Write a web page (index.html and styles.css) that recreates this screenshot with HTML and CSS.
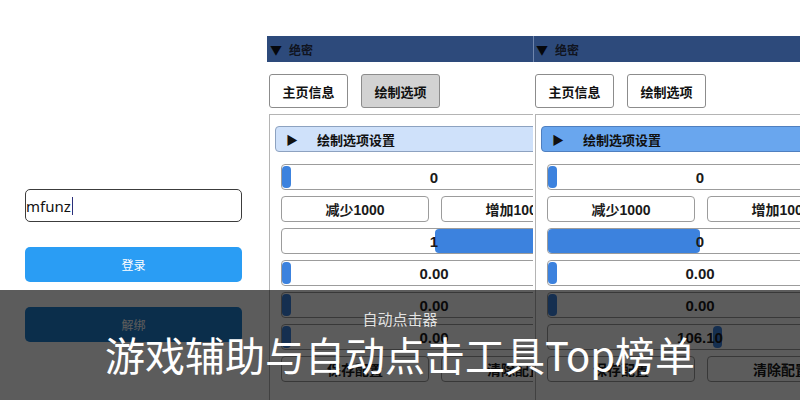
FILE: index.html
```html
<!DOCTYPE html>
<html lang="zh-CN">
<head>
<meta charset="utf-8">
<title>自动点击器</title>
<link rel="stylesheet" href="styles.css">
</head>
<body>
<div class="stage">
  <section class="login">
    <div class="field"><span class="typed">mfunz</span><span class="caret"></span></div>
    <button class="btn-primary">登录</button>
    <button class="btn-primary">解绑</button>
  </section>

  <section class="panel">
    <div class="bar"><span class="tri">▼</span>绝密</div>
    <div class="tabs">
      <button class="tab">主页信息</button>
      <button class="tab tab-active">绘制选项</button>
    </div>
    <div class="content">
      <div class="group-head group-head-soft"><span class="play">▶</span>绘制选项设置</div>
      <div class="rows">
        <div class="slider"><span class="thumb"></span><span class="val">0</span></div>
        <div class="pair"><button class="cmd">减少1000</button><button class="cmd">增加1000</button></div>
        <div class="slider"><span class="fill fill-right" style="left:153px"></span><span class="val">1</span></div>
        <div class="slider"><span class="thumb"></span><span class="val">0.00</span></div>
        <div class="slider"><span class="thumb"></span><span class="val">0.00</span></div>
        <div class="slider"><span class="thumb"></span><span class="val">0.00</span></div>
        <div class="pair"><button class="cmd">保存配置</button><button class="cmd">清除配置</button></div>
      </div>
    </div>
  </section>

  <section class="panel panel-next">
    <div class="bar"><span class="tri">▼</span>绝密</div>
    <div class="tabs">
      <button class="tab">主页信息</button>
      <button class="tab">绘制选项</button>
    </div>
    <div class="content">
      <div class="group-head group-head-strong"><span class="play">▶</span>绘制选项设置</div>
      <div class="rows">
        <div class="slider"><span class="thumb"></span><span class="val">0</span></div>
        <div class="pair"><button class="cmd">减少1000</button><button class="cmd">增加1000</button></div>
        <div class="slider"><span class="fill fill-left" style="width:152px"></span><span class="val">0</span></div>
        <div class="slider"><span class="thumb"></span><span class="val">0.00</span></div>
        <div class="slider"><span class="thumb"></span><span class="val">0.00</span></div>
        <div class="slider"><span class="thumb" style="left:165px"></span><span class="val">106.10</span></div>
        <div class="pair"><button class="cmd">保存配置</button><button class="cmd">清除配置</button></div>
      </div>
    </div>
  </section>

  <div class="caption">
    <p class="caption-sub">自动点击器</p>
    <h1 class="caption-title">游戏辅助与自动点击工具Top榜单</h1>
  </div>
</div>
</body>
</html>
```

FILE: styles.css
```css
* { box-sizing: border-box; }

html, body {
  margin: 0;
  padding: 0;
  width: 800px;
  height: 400px;
  overflow: hidden;
  background: #ffffff;
  font-family: "Liberation Sans", "Noto Sans CJK SC", sans-serif;
  color: #111;
}

button {
  font: inherit;
  margin: 0;
  cursor: pointer;
}

.stage {
  position: relative;
  display: flex;
  width: 800px;
  height: 400px;
  overflow: hidden;
}

/* login column */
.login {
  flex: none;
  width: 267px;
  padding: 189px 0 0 25px;
  display: flex;
  flex-direction: column;
  gap: 25px;
}

.field {
  width: 217px;
  height: 33px;
  border: 1.5px solid #3c3c3c;
  border-radius: 5px;
  display: flex;
  align-items: center;
  font-family: "Noto Sans", "Liberation Sans", sans-serif;
  font-size: 15px;
  color: #111;
}

.caret {
  width: 1.5px;
  height: 18px;
  background: #2b2f7a;
  margin-left: 1px;
}

.btn-primary {
  width: 217px;
  height: 35px;
  border: none;
  border-radius: 5px;
  background: #2a9df4;
  color: #fff;
  font-family: "Noto Sans CJK SC", sans-serif;
  font-size: 12px;
}

.login .btn-primary + .btn-primary { background: #1f7fd0; }

/* drawing-option panels */
.panel {
  flex: none;
  width: 266px;
  overflow: hidden;
  padding-top: 36px;
}

.panel-next { width: 268px; }

.bar {
  height: 26px;
  background: #2d4a7b;
  display: flex;
  align-items: center;
  padding-left: 3px;
  font-family: "Noto Sans CJK SC", sans-serif;
  font-weight: 700;
  font-size: 12px;
  color: #101420;
}

.panel-next .bar { border-left: 1px solid #6f86ad; padding-left: 2px; }

.tri {
  font-size: 12px;
  margin-right: 7px;
  color: #05070c;
}

.tabs {
  display: flex;
  gap: 13px;
  margin-top: 12px;
  padding-left: 2px;
}

.tab {
  width: 79px;
  height: 34px;
  background: #fff;
  border: 1px solid #8c8c8c;
  border-radius: 3px;
  font-family: "Noto Sans CJK SC", sans-serif;
  font-weight: 700;
  font-size: 13px;
  color: #111;
}

.tab-active { background: #d2d2d2; }

.content {
  margin: 6px 0 0 2px;
  width: 330px;
  border-top: 1px solid #b4b4b4;
  border-left: 1px solid #b4b4b4;
  padding: 11px 0 0 5px;
  height: 300px;
}

.group-head {
  height: 26px;
  width: 320px;
  border: 1px solid #8da2c0;
  border-radius: 4px;
  display: flex;
  align-items: center;
  padding-left: 10px;
  font-family: "Noto Sans CJK SC", sans-serif;
  font-weight: 700;
  font-size: 13px;
  color: #111;
}

.group-head-soft { background: #cfe1fa; }
.group-head-strong { background: #69a6ee; border-color: #4f7fbf; }

.play {
  font-size: 12px;
  margin-right: 19px;
}

.rows {
  margin: 12px 0 0 6px;
  width: 306px;
  display: flex;
  flex-direction: column;
  gap: 6px;
}

.slider {
  position: relative;
  height: 26px;
  border: 1px solid #9c9c9c;
  border-radius: 4px;
  background: #fff;
  display: flex;
  align-items: center;
  justify-content: center;
  font-size: 15px;
  font-weight: 700;
  color: #1a1a1a;
}

.thumb {
  position: absolute;
  left: 0;
  top: 1px;
  width: 9px;
  height: 22px;
  border-radius: 4px;
  background: #3c82de;
}

.fill {
  position: absolute;
  top: 0;
  bottom: 0;
  background: #3c82de;
}

.fill-right { right: 0; border-radius: 4px 0 0 4px; }
.fill-left { left: 0; border-radius: 4px; }

.val { position: relative; }

.pair {
  display: flex;
  gap: 12px;
}

.cmd {
  width: 148px;
  height: 26px;
  flex: none;
  background: #fff;
  border: 1px solid #9c9c9c;
  border-radius: 4px;
  font-family: "Liberation Sans", "Noto Sans CJK SC", sans-serif;
  font-weight: 700;
  font-size: 14px;
  color: #1a1a1a;
}

/* caption band across the bottom */
.caption {
  position: absolute;
  left: 0;
  right: 0;
  top: 290px;
  bottom: 0;
  background: rgba(0, 0, 0, 0.64);
  display: flex;
  flex-direction: column;
  align-items: center;
}

.caption-sub {
  margin: 19px 0 0;
  font-family: "Noto Sans CJK SC", sans-serif;
  font-size: 15px;
  line-height: 20px;
  color: #e2e2e2;
}

.caption-title {
  margin: 0;
  font-family: "Noto Sans CJK SC", sans-serif;
  font-weight: 400;
  font-size: 40px;
  line-height: 50px;
  color: #ffffff;
}
```
